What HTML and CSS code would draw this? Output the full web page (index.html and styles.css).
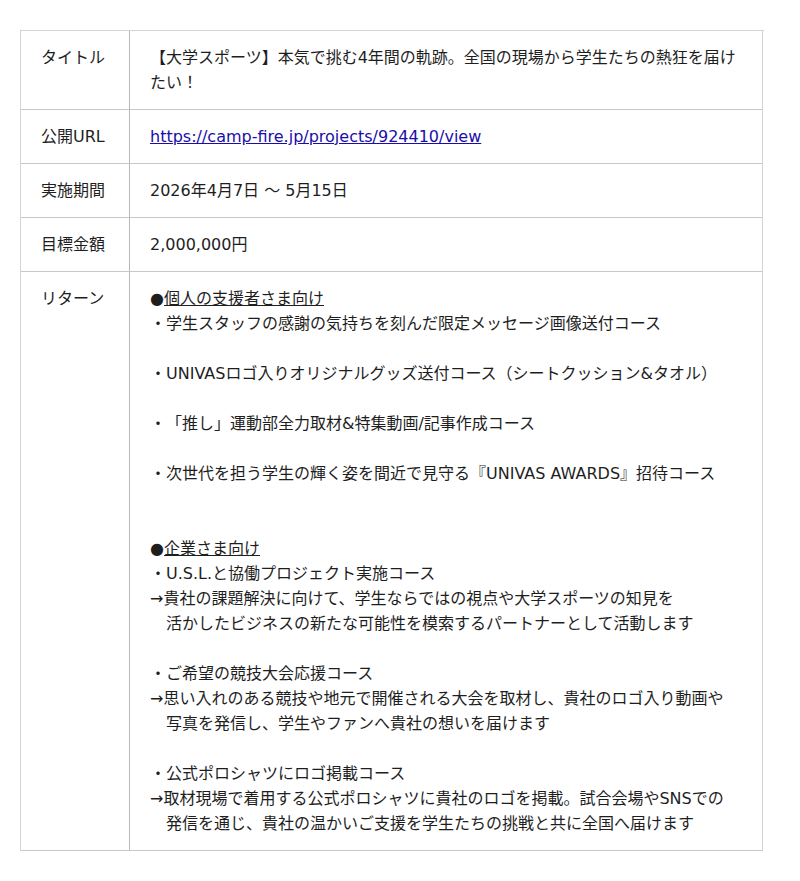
FILE: index.html
```html
<!DOCTYPE html>
<html lang="ja">
<head>
<meta charset="utf-8">
<title>プロジェクト概要</title>
<link rel="stylesheet" href="styles.css">
</head>
<body>
<div class="info-table">
  <div class="label">タイトル</div>
  <div class="value">【大学スポーツ】本気で挑む4年間の軌跡。全国の現場から学生たちの熱狂を届けたい！</div>

  <div class="label">公開URL</div>
  <div class="value"><a href="#">https://camp-fire.jp/projects/924410/view</a></div>

  <div class="label">実施期間</div>
  <div class="value">2026年4月7日 〜 5月15日</div>

  <div class="label">目標金額</div>
  <div class="value">2,000,000円</div>

  <div class="label">リターン</div>
  <div class="value">●<u>個人の支援者さま向け</u><br>・学生スタッフの感謝の気持ちを刻んだ限定メッセージ画像送付コース<br><br>・UNIVASロゴ入りオリジナルグッズ送付コース（シートクッション&amp;タオル）<br><br>・「推し」運動部全力取材&amp;特集動画/記事作成コース<br><br>・次世代を担う学生の輝く姿を間近で見守る『UNIVAS AWARDS』招待コース<br><br><br>●<u>企業さま向け</u><br>・U.S.L.と協働プロジェクト実施コース<br>→貴社の課題解決に向けて、学生ならではの視点や大学スポーツの知見を<br>　活かしたビジネスの新たな可能性を模索するパートナーとして活動します<br><br>・ご希望の競技大会応援コース<br>→思い入れのある競技や地元で開催される大会を取材し、貴社のロゴ入り動画や<br>　写真を発信し、学生やファンへ貴社の想いを届けます<br><br>・公式ポロシャツにロゴ掲載コース<br>→取材現場で着用する公式ポロシャツに貴社のロゴを掲載。試合会場やSNSでの<br>　発信を通じ、貴社の温かいご支援を学生たちの挑戦と共に全国へ届けます</div>
</div>
</body>
</html>
```

FILE: styles.css
```css
html, body {
  margin: 0;
  padding: 0;
  background: #ffffff;
}

body {
  font-family: "DejaVu Sans", "Noto Sans CJK JP", sans-serif;
  font-size: 16px;
  line-height: 25px;
  color: #1e1e1e;
  text-spacing-trim: space-all;
}

.info-table {
  display: grid;
  grid-template-columns: 109px 633px;
  width: 743px;
  margin: 30px 0 0 20px;
  border-top: 1px solid #d4d4d4;
  border-left: 1px solid #d4d4d4;
}

.label,
.value {
  padding: 14px 20px;
  border-right: 1px solid #d4d4d4;
  border-bottom: 1px solid #c8c8c8;
}

.label {
  border-right-color: #b8b8b8;
}

.value a {
  color: #1a0dab;
  text-decoration: underline;
}

.value u {
  text-decoration: underline;
}
```
